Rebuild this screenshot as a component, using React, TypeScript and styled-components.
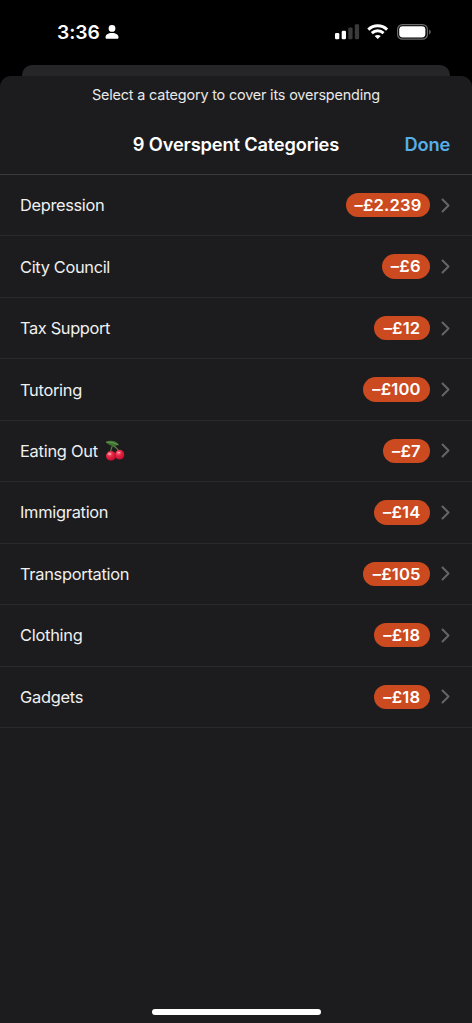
import React from "react";
import styled, { createGlobalStyle } from "styled-components";

const GlobalStyle = createGlobalStyle`
  * { box-sizing: border-box; }
  html, body { margin: 0; background: #000; }
  body { font-family: Inter, "Liberation Sans", sans-serif; color: #f0f0f0; overflow: hidden; }
`;

const Screen = styled.main`
  width: 472px;
  height: 1023px;
  display: flex;
  flex-direction: column;
  background: #000;
  overflow: hidden;
`;

const StatusBar = styled.header`
  height: 65px;
  flex: none;
  display: flex;
  justify-content: space-between;
  padding: 22px 40px 0 57px;
`;

const StatusGroup = styled.div`
  display: flex;
  align-items: center;
  height: 20px;
`;

const Time = styled.span`
  font-size: 19.3px;
  font-weight: 600;
  line-height: 20px;
  letter-spacing: -0.1px;
  color: #fff;
  width: 48px;
  white-space: nowrap;
`;

const BackSheet = styled.div`
  height: 11px;
  flex: none;
  margin: 0 22px;
  border-radius: 10px 10px 0 0;
  background: #262628;
`;

const Sheet = styled.section`
  flex: 1;
  display: flex;
  flex-direction: column;
  border-radius: 11px 11px 0 0;
  background: #1c1c1e;
`;

const Prompt = styled.p`
  margin: 9px 0 0;
  height: 20px;
  line-height: 20px;
  font-size: 14.4px;
  letter-spacing: -0.17px;
  text-align: center;
  color: #e8e8e8;
`;

const TitleBar = styled.div`
  height: 70px;
  display: grid;
  grid-template-columns: 1fr auto 1fr;
  align-items: center;
  padding: 9px 22px 0 22px;
  border-bottom: 1px solid #3a3a3c;
`;

const Title = styled.h1`
  grid-column: 2;
  margin: 0;
  font-size: 18.3px;
  font-weight: 600;
  letter-spacing: -0.17px;
  color: #fff;
`;

const DoneButton = styled.button`
  justify-self: end;
  border: 0;
  padding: 0;
  background: none;
  font: 600 18.3px Inter, sans-serif;
  letter-spacing: -0.2px;
  color: #56aee8;
`;

const List = styled.ul`
  list-style: none;
  margin: 0;
  padding: 0;
`;

const Row = styled.li`
  height: 61.45px;
  display: flex;
  align-items: center;
  padding: 0 22px 0 20px;
  border-bottom: 1px solid #29292b;
`;

const Label = styled.span<{ $spacing: number }>`
  display: flex;
  align-items: center;
  flex: 1;
  font-size: 16.4px;
  line-height: 24px;
  letter-spacing: ${(p) => p.$spacing}px;
  white-space: nowrap;
`;

const Badge = styled.span<{ $width: number }>`
  width: ${(p) => p.$width}px;
  height: 24.4px;
  border-radius: 13px;
  background: #cb4a1f;
  color: #fff;
  font-size: 16.6px;
  font-weight: 600;
  line-height: 25px;
  letter-spacing: 0.15px;
  text-align: center;
  white-space: nowrap;
  margin-right: 11px;
`;

const HomeArea = styled.footer`
  margin-top: auto;
  height: 14.5px;
  display: flex;
  justify-content: center;
`;

const HomeIndicator = styled.div`
  width: 169px;
  height: 6px;
  border-radius: 3px;
  background: #fff;
`;

const PersonIcon = () => (
  <svg width="14" height="16" viewBox="0 0 14 16" fill="#fff">
    <circle cx="7" cy="4.4" r="3.4" />
    <path d="M.5 13.4C.5 10.8 3.1 9 7 9s6.500 1.800 6.500 4.400c0 .9-.5 1.300-1.500 1.300H2c-1 0-1.500-.4-1.500-1.300Z" />
  </svg>
);

const StatusIcons = () => (
  <svg width="98" height="20" viewBox="334 22 98 20">
    <rect x="335" y="33" width="4.300" height="6.300" rx="1.200" fill="#fff" />
    <rect x="341.700" y="30.700" width="4.300" height="8.600" rx="1.200" fill="#fff" />
    <rect x="348.300" y="27.500" width="4.300" height="11.800" rx="1.200" fill="#3a3a3a" />
    <rect x="354.800" y="24.200" width="4.300" height="15.100" rx="1.200" fill="#3a3a3a" />
    <g fill="none" stroke="#fff" strokeWidth="2.900">
      <path d="M368.300 29.600c5.400-5.100 13.400-5.100 18.800 0" />
      <path d="M371.800 33.100c3.400-3.200 8.400-3.200 11.800 0" />
    </g>
    <path d="M374.600 36c1.900-1.500 4.300-1.500 6.200 0l-3.100 3.100Z" fill="#fff" />
    <rect x="397.600" y="24.600" width="29.800" height="14.600" rx="4.800" fill="none" stroke="#6c6c6c" strokeWidth="1.200" />
    <rect x="399.200" y="26.200" width="26.200" height="11.300" rx="3.400" fill="#fff" />
    <path d="M429.200 29.400c2 .8 2 4.200 0 5Z" fill="#6c6c6c" />
  </svg>
);

const Chevron = () => (
  <svg width="9" height="15" viewBox="0 0 9 15" fill="none" stroke="#656567" strokeWidth="2" strokeLinecap="round" strokeLinejoin="round">
    <path d="m1.500 1.500 6 6-6 6" />
  </svg>
);

const CherryArt = styled.svg`
  margin-left: 7.5px;
`;

const Cherries = () => (
  <CherryArt width="20" height="22" viewBox="0 0 20 22">
    <defs>
      <radialGradient id="cherry" cx=".35" cy=".3" r=".75">
        <stop offset="0" stopColor="#fa6b80" />
        <stop offset=".4" stopColor="#e72845" />
        <stop offset="1" stopColor="#b80c2c" />
      </radialGradient>
    </defs>
    <path d="M7.500 5.500c-1 2-1.700 4-1.900 7M8 5.500c2.500 1.400 5 3.900 6 6.500" fill="none" stroke="#658344" strokeWidth="1.100" />
    <path d="M1 2.100C5-.2 11.500.2 13.500 4.800 9.500 7 4 6.100 1 2.100Z" fill="#3d7235" />
    <path d="M1 2.100C5 2 9.500 2.800 13.500 4.800" fill="none" stroke="#78a350" strokeWidth=".8" />
    <ellipse cx="14.700" cy="14.700" rx="4.600" ry="4.900" fill="url(#cherry)" />
    <ellipse cx="6" cy="15.900" rx="5" ry="4.900" fill="url(#cherry)" />
    <ellipse cx="4.700" cy="14" rx="1.700" ry="1" fill="#ff9ba8" />
    <ellipse cx="14.200" cy="12.700" rx="1.500" ry=".8" fill="#ff9ba8" />
  </CherryArt>
);

interface Category {
  name: string;
  amount: string;
  width: number;
  spacing: number;
  cherries?: boolean;
}

const categories: Category[] = [
  { name: "Depression", amount: "–£2.239", width: 84, spacing: -0.34 },
  { name: "City Council", amount: "–£6", width: 48.5, spacing: -0.33 },
  { name: "Tax Support", amount: "–£12", width: 56, spacing: -0.36 },
  { name: "Tutoring", amount: "–£100", width: 67, spacing: -0.28 },
  { name: "Eating Out", amount: "–£7", width: 47.3, spacing: -0.24, cherries: true },
  { name: "Immigration", amount: "–£14", width: 56.5, spacing: -0.28 },
  { name: "Transportation", amount: "–£105", width: 66.7, spacing: -0.28 },
  { name: "Clothing", amount: "–£18", width: 56.5, spacing: -0.25 },
  { name: "Gadgets", amount: "–£18", width: 56.5, spacing: -0.26 },
];

export default function App() {
  return (
    <Screen>
      <GlobalStyle />
      <StatusBar>
        <StatusGroup>
          <Time>3:36</Time>
          <PersonIcon />
        </StatusGroup>
        <StatusGroup>
          <StatusIcons />
        </StatusGroup>
      </StatusBar>
      <BackSheet />
      <Sheet>
        <Prompt>Select a category to cover its overspending</Prompt>
        <TitleBar>
          <Title>9 Overspent Categories</Title>
          <DoneButton>Done</DoneButton>
        </TitleBar>
        <List>
          {categories.map((c) => (
            <Row key={c.name}>
              <Label $spacing={c.spacing}>
                {c.name}
                {c.cherries && <Cherries />}
              </Label>
              <Badge $width={c.width}>{c.amount}</Badge>
              <Chevron />
            </Row>
          ))}
        </List>
        <HomeArea>
          <HomeIndicator />
        </HomeArea>
      </Sheet>
    </Screen>
  );
}
